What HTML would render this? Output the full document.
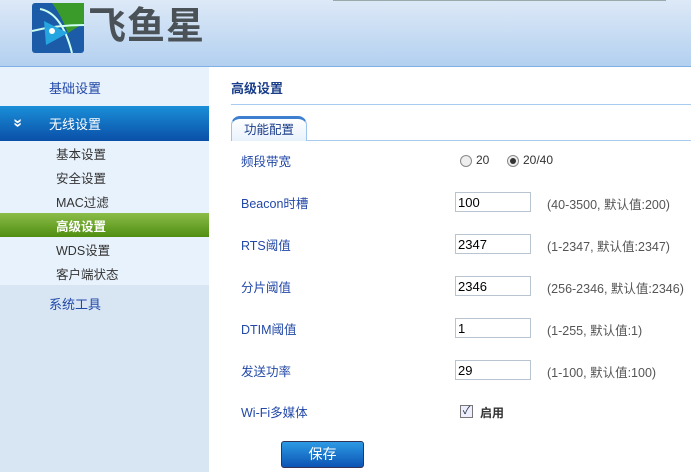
<!DOCTYPE html><html><head><meta charset="utf-8"><style>
body{margin:0;width:691px;height:472px;overflow:hidden;font-family:"Liberation Sans","Noto Sans CJK SC",sans-serif;font-size:12px;position:relative;background:#fff}
.a{position:absolute}
#hd{left:0;top:0;width:691px;height:66px;background:linear-gradient(#dde9f7,#b3d0f0);border-bottom:1px solid #7fb0e4}
#sb{left:0;top:67px;width:209px;height:405px;background:#e8f2fc}
.lab{color:#2248a8;font-size:13px}
.sub{left:56px;color:#333;font-size:12.5px}
input[type=text]{position:absolute;left:455px;width:70px;height:16px;border:1px solid #b8c4d0;font-size:13px;padding:1px 2px;font-family:"Liberation Sans",sans-serif}
.h{left:547px;color:#555;font-size:12.5px}
</style></head><body>
<div id="hd" class="a"></div>
<div class="a" style="left:333px;top:0;width:333px;height:1px;background:#9aa"></div>
<svg class="a" style="left:32px;top:3px" width="52" height="50" viewBox="0 0 52 50"><rect width="52" height="50" rx="3" fill="#1c5ba8"/><path d="M20 0H52V20L36 30Q28 10 20 0Z" fill="#3a9a2a"/><path d="M8 6Q30 10 40 50" stroke="#cfe" stroke-width="2" fill="none"/><path d="M0 28Q25 22 52 22" stroke="#cfe" stroke-width="2" fill="none"/><path d="M12 18L36 30L14 42Z" fill="#25a6e0"/><circle cx="20" cy="28" r="3" fill="#fff"/></svg>
<div class="a" style="left:88px;top:5px;font-size:38px;font-weight:bold;color:#4a5258;letter-spacing:1px;line-height:44px">飞鱼星</div>
<div id="sb" class="a"></div>
<div class="a" style="left:0;top:285px;width:209px;height:187px;background:#d8e6f4"></div>
<div class="a lab" style="left:49px;top:78px">基础设置</div>
<div class="a" style="left:0;top:106px;width:209px;height:35px;background:linear-gradient(#1a8fd8,#0a4fa8)"></div>
<div class="a" style="left:13px;top:114px;color:#fff;font-size:16px;font-weight:bold;transform:rotate(90deg)">»</div>
<div class="a" style="left:49px;top:114px;color:#fff;font-size:13px">无线设置</div>
<div class="a sub" style="top:144px">基本设置</div>
<div class="a sub" style="top:168px">安全设置</div>
<div class="a sub" style="top:192px">MAC过滤</div>
<div class="a" style="left:0;top:213px;width:209px;height:24px;background:linear-gradient(#8bbd48,#4f8e12)"></div>
<div class="a sub" style="top:216px;color:#fff;font-weight:bold">高级设置</div>
<div class="a sub" style="top:240px">WDS设置</div>
<div class="a sub" style="top:264px">客户端状态</div>
<div class="a lab" style="left:49px;top:294px">系统工具</div>
<div class="a" style="left:231px;top:78px;color:#1b3e8a;font-size:13px;font-weight:bold">高级设置</div>
<div class="a" style="left:231px;top:104px;width:460px;height:1px;background:#a8ccf0"></div>
<div class="a" style="left:231px;top:140px;width:460px;height:1px;background:#a8ccf0"></div>
<div class="a" style="left:231px;top:116px;width:76px;height:25px;border:1px solid #9cc4ec;border-bottom:none;border-radius:9px 9px 0 0;background:linear-gradient(#fff,#e8f2fc);border-top:3px solid #3e7fd0;box-sizing:border-box;text-align:center;line-height:22px;color:#1b3e8a;font-size:12.5px">功能配置</div>
<div class="a lab" style="left:241px;top:151px;font-size:12.5px">频段带宽</div>
<div class="a lab" style="left:241px;top:193px;font-size:12.5px">Beacon时槽</div>
<div class="a lab" style="left:241px;top:235px;font-size:12.5px">RTS阈值</div>
<div class="a lab" style="left:241px;top:277px;font-size:12.5px">分片阈值</div>
<div class="a lab" style="left:241px;top:319px;font-size:12.5px">DTIM阈值</div>
<div class="a lab" style="left:241px;top:361px;font-size:12.5px">发送功率</div>
<div class="a lab" style="left:241px;top:402px;font-size:12.5px">Wi-Fi多媒体</div>
<div class="a" style="left:460px;top:155px;width:10px;height:10px;border:1px solid #888;border-radius:50%;background:#eee"></div>
<div class="a" style="left:476px;top:153px;color:#333">20</div>
<div class="a" style="left:507px;top:155px;width:10px;height:10px;border:1px solid #888;border-radius:50%;background:#eee"><div style="margin:2px;width:6px;height:6px;border-radius:50%;background:#333"></div></div>
<div class="a" style="left:523px;top:153px;color:#333">20/40</div>
<input type="text" style="top:192px" value="100"><div class="a h" style="top:194px">(40-3500, 默认值:200)</div>
<input type="text" style="top:234px" value="2347"><div class="a h" style="top:236px">(1-2347, 默认值:2347)</div>
<input type="text" style="top:276px" value="2346"><div class="a h" style="top:278px">(256-2346, 默认值:2346)</div>
<input type="text" style="top:318px" value="1"><div class="a h" style="top:320px">(1-255, 默认值:1)</div>
<input type="text" style="top:360px" value="29"><div class="a h" style="top:362px">(1-100, 默认值:100)</div>
<div class="a" style="left:460px;top:405px;width:11px;height:11px;border:1px solid #777;background:#eef;font-size:11px;line-height:11px;text-align:center;color:#234">✓</div>
<div class="a" style="left:480px;top:404px;color:#333;font-weight:bold">启用</div>
<div class="a" style="left:281px;top:441px;width:81px;height:25px;border:1px solid #335;border-radius:3px;background:linear-gradient(#2c9ae4,#0d54b4);color:#fff;font-size:14px;text-align:center;line-height:25px">保存</div>
</body></html>
